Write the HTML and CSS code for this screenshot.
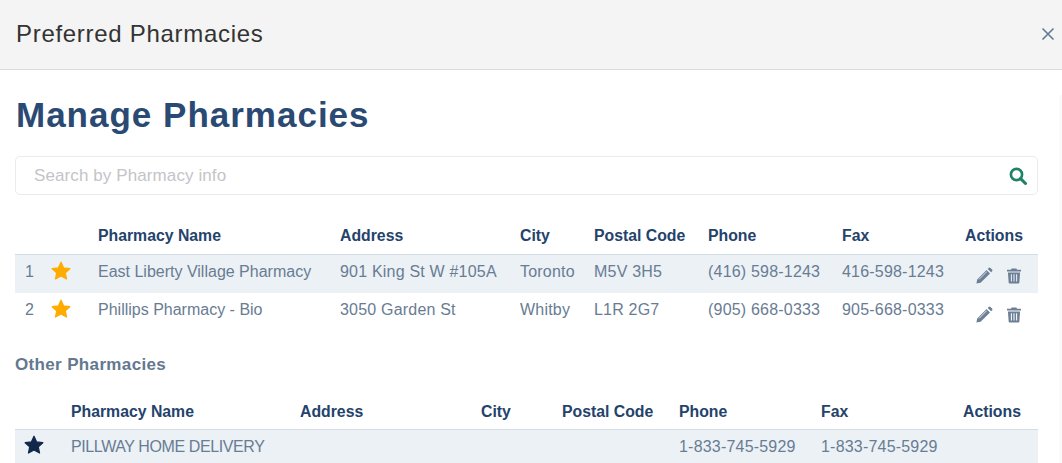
FILE: index.html
```html
<!DOCTYPE html>
<html lang="en">
<head>
<meta charset="utf-8">
<title>Preferred Pharmacies</title>
<link rel="stylesheet" href="styles.css">
</head>
<body>
<div class="modal">
  <header class="modal-header">
    <h2 class="modal-title">Preferred Pharmacies</h2>
    <button class="close" aria-label="Close">
      <svg width="14" height="14" viewBox="0 0 14 14"><path d="M1.5 1.5l11 11M12.5 1.5l-11 11" stroke="#5f7a94" stroke-width="1.6" fill="none"/></svg>
    </button>
  </header>
  <main class="modal-body">
    <h1 class="page-title">Manage Pharmacies</h1>
    <div class="search">
      <span class="search-text">Search by Pharmacy info</span>
      <svg class="search-icon" width="18" height="18" viewBox="0 0 18 18"><circle cx="7.5" cy="7.5" r="5.6" fill="none" stroke="#1f8268" stroke-width="2.6"/><path d="M11.6 11.6l4.9 4.9" stroke="#1f8268" stroke-width="3" stroke-linecap="round"/></svg>
    </div>
    <table class="grid preferred">
      <colgroup><col class="p1"><col class="p2"><col class="p3"><col class="p4"><col class="p5"><col class="p6"><col class="p7"><col class="p8"><col class="p9"></colgroup>
      <thead><tr><th></th><th></th><th>Pharmacy Name</th><th>Address</th><th>City</th><th>Postal Code</th><th>Phone</th><th>Fax</th><th>Actions</th></tr></thead>
      <tbody>
        <tr class="shaded">
          <td>1</td>
          <td><svg class="star" width="20" height="19" viewBox="0 0 24 23"><path fill="#ffab00" stroke="#ffab00" stroke-width="1.5" stroke-linejoin="round" d="M12 1.5l3.2 6.9 7.5.9-5.5 5.1 1.5 7.4L12 18.1l-6.7 3.7 1.5-7.4-5.5-5.1 7.5-.9z"/></svg></td>
          <td class="name">East Liberty Village Pharmacy</td><td>901 King St W #105A</td><td>Toronto</td><td>M5V 3H5</td><td>(416) 598-1243</td><td>416-598-1243</td>
          <td>
            <div class="actions">
              <svg width="17" height="17" viewBox="0 0 17 17"><path fill="#6c7f96" d="M1.2 12.4L10.6 3l3.4 3.400-9.400 9.400-4.200.8zM11.700 1.900l1-1a1.200 1.200 0 0 1 1.700 0l1.700 1.700a1.200 1.200 0 0 1 0 1.700l-1 1z"/><path stroke="#ecf1f6" stroke-width=".8" d="M3 12.400l7.800-7.800"/></svg>
              <svg width="14" height="16" viewBox="0 0 15 16"><path fill="#6c7f96" d="M5 0h5l.8 1.400H15v1.800H0V1.400h4.200zM1 4.200h13l-.8 11a.9.9 0 0 1-.9.8H2.700a.9.9 0 0 1-.9-.8z"/><path stroke="#ecf1f6" stroke-width="1.100" d="M4.700 6v8M7.500 6v8M10.300 6v8"/></svg>
            </div>
          </td>
        </tr>
        <tr class="second">
          <td>2</td>
          <td><svg class="star" width="20" height="19" viewBox="0 0 24 23"><path fill="#ffab00" stroke="#ffab00" stroke-width="1.5" stroke-linejoin="round" d="M12 1.500l3.200 6.900 7.500.9-5.500 5.100 1.500 7.400L12 18.100l-6.700 3.700 1.500-7.400-5.500-5.100 7.500-.9z"/></svg></td>
          <td class="name">Phillips Pharmacy - Bio</td><td>3050 Garden St</td><td>Whitby</td><td>L1R 2G7</td><td>(905) 668-0333</td><td>905-668-0333</td>
          <td>
            <div class="actions">
              <svg width="17" height="17" viewBox="0 0 17 17"><path fill="#6c7f96" d="M1.200 12.400L10.600 3l3.400 3.400-9.400 9.400-4.200.8zM11.700 1.900l1-1a1.200 1.200 0 0 1 1.700 0l1.700 1.700a1.200 1.200 0 0 1 0 1.700l-1 1z"/><path stroke="#fff" stroke-width=".8" d="M3 12.400l7.800-7.800"/></svg>
              <svg width="14" height="16" viewBox="0 0 15 16"><path fill="#6c7f96" d="M5 0h5l.8 1.400H15v1.800H0V1.400h4.200zM1 4.200h13l-.8 11a.9.9 0 0 1-.9.8H2.700a.9.9 0 0 1-.9-.8z"/><path stroke="#fff" stroke-width="1.100" d="M4.700 6v8M7.500 6v8M10.300 6v8"/></svg>
            </div>
          </td>
        </tr>
      </tbody>
    </table>
    <h3 class="section-title">Other Pharmacies</h3>
    <table class="grid other">
      <colgroup><col class="o1"><col class="o2"><col class="o3"><col class="o4"><col class="o5"><col class="o6"><col class="o7"><col class="o8"></colgroup>
      <thead><tr><th></th><th>Pharmacy Name</th><th>Address</th><th>City</th><th>Postal Code</th><th>Phone</th><th>Fax</th><th>Actions</th></tr></thead>
      <tbody>
        <tr class="shaded">
          <td><svg class="star" width="20" height="19" viewBox="0 0 24 23"><path fill="#12284a" stroke="#12284a" stroke-width="1.5" stroke-linejoin="round" d="M12 1.500l3.200 6.900 7.500.9-5.500 5.100 1.500 7.400L12 18.100l-6.700 3.700 1.500-7.400-5.500-5.100 7.500-.9z"/></svg></td>
          <td class="caps">PILLWAY HOME DELIVERY</td><td></td><td></td><td></td><td>1-833-745-5929</td><td>1-833-745-5929</td><td></td>
        </tr>
      </tbody>
    </table>
  </main>
</div>
</body>
</html>
```
FILE: styles.css
```css
* { box-sizing: border-box; }
html, body { margin: 0; height: 100%; overflow: hidden; background: #fff; }
body { font-family: "Liberation Sans", Arial, sans-serif; color: #687c93; }
.modal { width: 100%; height: 463px; overflow: hidden; background: #fff; }
.modal-header {
  height: 70px;
  padding: 0 7px 2px 16px;
  display: flex;
  align-items: center;
  justify-content: space-between;
  background: #f4f4f4;
  border-bottom: 1px solid #dcdcdc;
}
.modal-title { margin: 0; font-size: 24px; font-weight: 400; letter-spacing: 0.7px; color: #333; }
.close { padding: 0; border: 0; background: none; display: flex; }
.modal-body { height: 393px; padding: 0 21px 0 15px; border-right: 3px solid #fafafa; }
.page-title { margin: 25px 0 0; font-size: 35px; line-height: 40px; font-weight: 700; letter-spacing: 1px; color: #2a4a73; text-indent: 1px; }
.search {
  height: 39px;
  margin-top: 21px;
  padding: 0 10px 0 18px;
  display: flex;
  align-items: center;
  justify-content: space-between;
  border: 1px solid #e9ebef;
  border-radius: 5px;
}
.search-text { font-size: 17px; letter-spacing: 0.1px; color: #c4c4c8; }
.grid { width: 100%; table-layout: fixed; border-collapse: collapse; font-size: 16px; letter-spacing: 0.2px; }
.preferred { margin-top: 23px; }
.grid th { height: 36px; padding: 1px 0 0 10px; text-align: left; font-size: 15.8px; letter-spacing: 0; font-weight: 700; color: #24436c; border-bottom: 1px solid #d3dbe4; }
.grid td { height: 39px; padding: 0 0 4px 10px; white-space: nowrap; }
.grid .second td { padding-bottom: 6px; }
.grid .name { letter-spacing: 0; }
.grid .caps { letter-spacing: -0.4px; }
.shaded td { background: #ecf1f6; }
.star { display: block; margin-top: -2px; margin-left: -1px; }
.other .star { margin-top: -4px; }
.actions { display: flex; align-items: center; gap: 14px; padding: 8px 0 0 11px; }
.second .actions { padding-top: 10px; }
.section-title { margin: 23px 0 0; font-size: 17px; line-height: 20px; font-weight: 700; letter-spacing: 0.35px; color: #64788f; }
.other { margin-top: 20px; }
.other th { height: 34px; padding: 0 0 0 10px; }
.p1 { width: 27px; } .p2 { width: 46px; } .p3 { width: 242px; } .p4 { width: 180px; } .p5 { width: 74px; } .p6 { width: 114px; } .p7 { width: 134px; } .p8 { width: 123px; } .p9 { width: auto; }
.o1 { width: 46px; } .o2 { width: 229px; } .o3 { width: 181px; } .o4 { width: 81px; } .o5 { width: 117px; } .o6 { width: 142px; } .o7 { width: 142px; } .o8 { width: auto; }
```
